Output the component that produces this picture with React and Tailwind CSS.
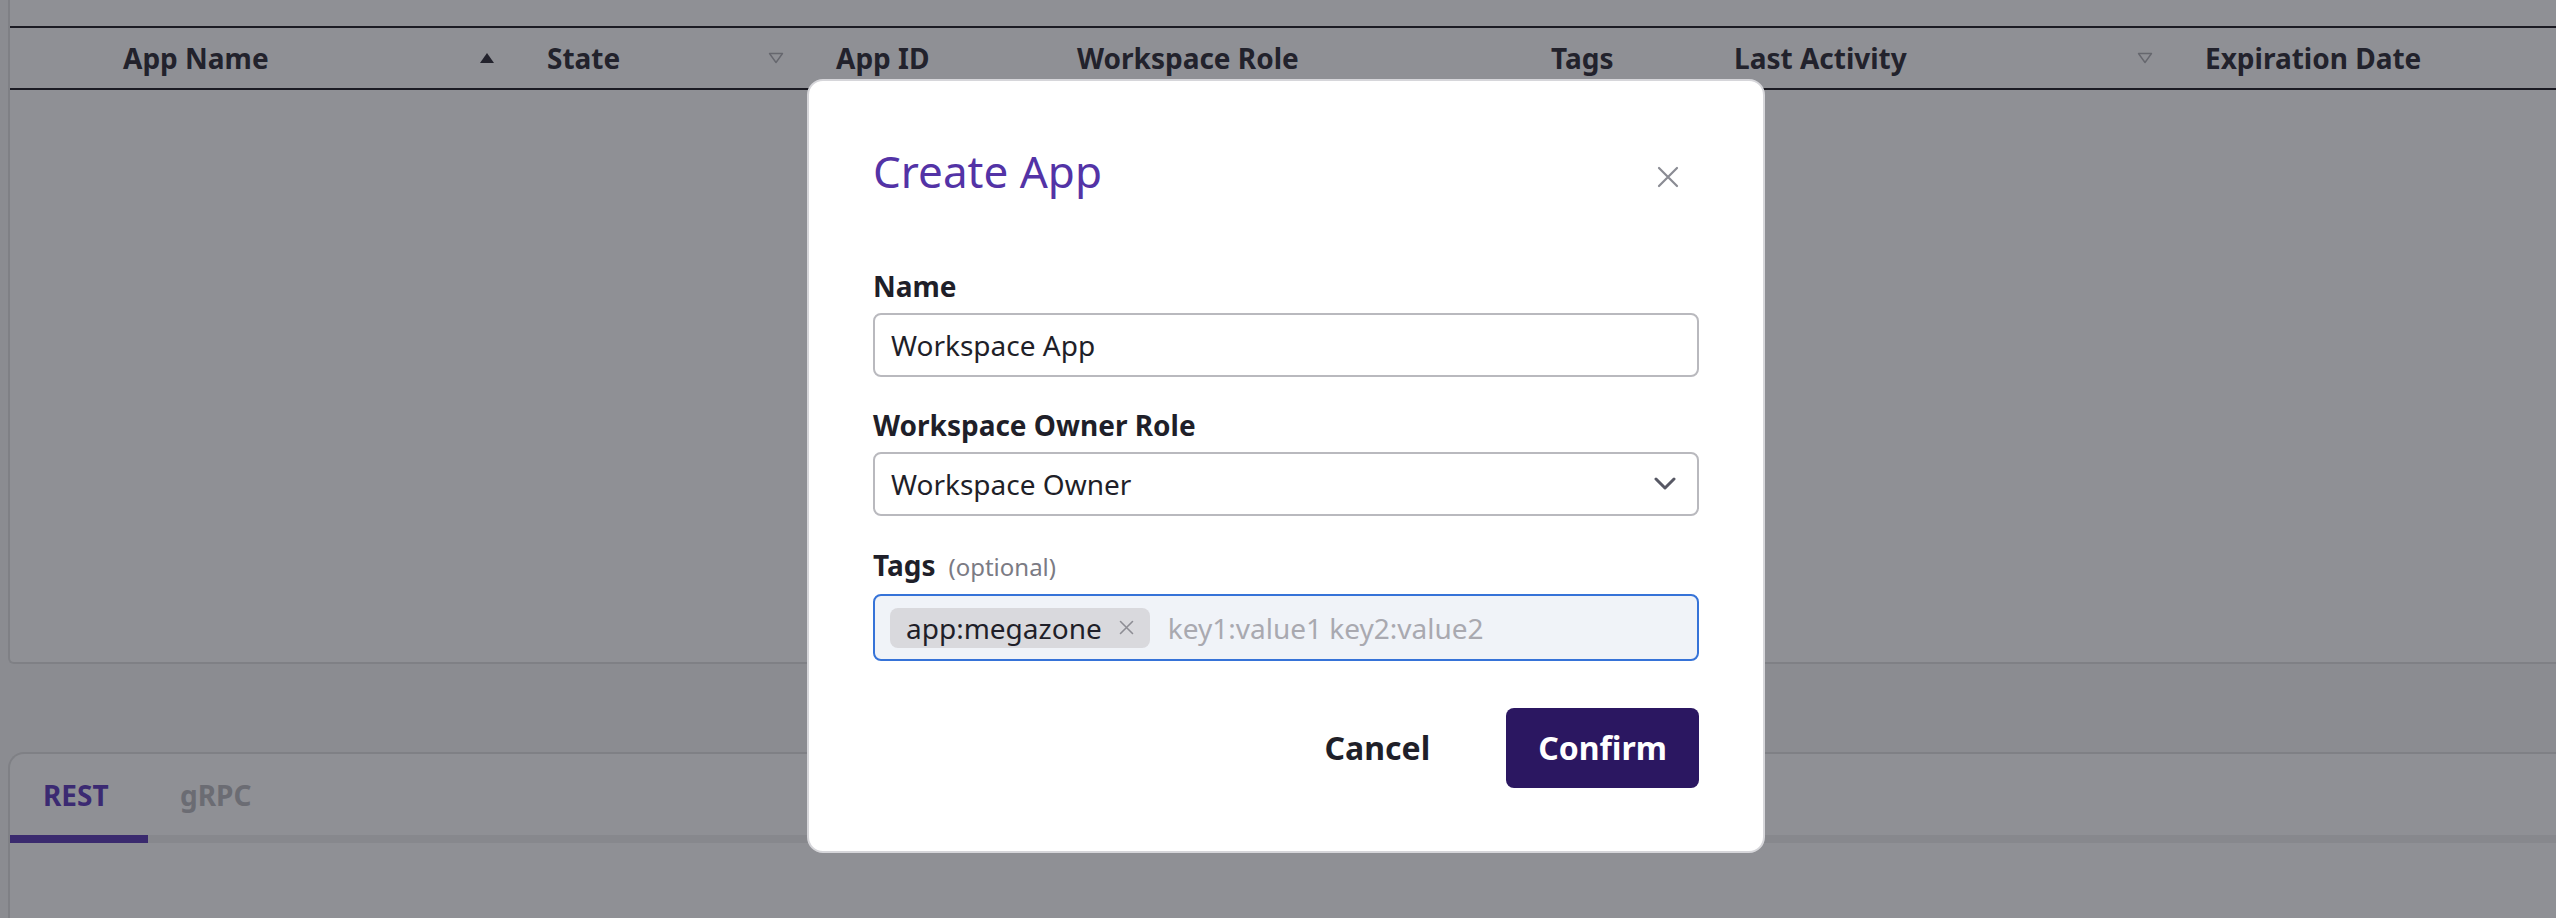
import React from "react";

function SortUp() {
  return (
    <svg width="16" height="12" viewBox="0 0 16 12">
      <path d="M8 1 L15 11 L1 11 Z" fill="#23232d" />
    </svg>
  );
}

function SortDownOutline() {
  return (
    <svg width="16" height="12" viewBox="0 0 16 12">
      <path d="M1.5 1.5 L14.5 1.5 L8 10.5 Z" fill="none" stroke="#66676e" strokeWidth="1.4" strokeLinejoin="round" />
    </svg>
  );
}

function HeaderCell({ w, children, icon }) {
  return (
    <div className={`${w} shrink-0 px-[26px] flex items-center justify-between`}>
      <span className="text-[28px] leading-[40px] font-bold text-[#22222c] whitespace-nowrap">{children}</span>
      {icon}
    </div>
  );
}

export default function App() {
  return (
    <div className="relative w-[2556px] h-[918px] overflow-hidden bg-[#8b8c91] font-['Noto_Sans',sans-serif]">
      <div className="flex flex-col pl-[8px] h-full">
        {/* Top panel */}
        <div className="h-[664px] shrink-0 bg-[#8f9095] border-l-2 border-b-2 border-[#7f8085] rounded-bl-[6px]">
          <div className="h-[26px]" />
          <div className="h-[64px] border-y-2 border-[#1b1b23] flex items-stretch">
            <div className="w-[87px] shrink-0" />
            <HeaderCell w="w-[424px]" icon={<SortUp />}>App Name</HeaderCell>
            <HeaderCell w="w-[289px]" icon={<SortDownOutline />}>State</HeaderCell>
            <HeaderCell w="w-[241px]">App ID</HeaderCell>
            <HeaderCell w="w-[474px]">Workspace Role</HeaderCell>
            <HeaderCell w="w-[183px]">Tags</HeaderCell>
            <HeaderCell w="w-[471px]" icon={<SortDownOutline />}>Last Activity</HeaderCell>
            <HeaderCell w="w-[360px]">Expiration Date</HeaderCell>
          </div>
        </div>

        {/* Bottom panel */}
        <div className="mt-[88px] flex-1 bg-[#8f9095] border-l-2 border-t-2 border-[#7f8085] rounded-tl-[16px]">
          <div className="flex">
            <div className="w-[138px] pl-[33px] pt-[21px] pb-[20px]">
              <span className="text-[28px] leading-[40px] font-bold text-[#3b2a72]">REST</span>
            </div>
            <div className="pl-[32px] pt-[21px] pb-[20px]">
              <span className="text-[28px] leading-[40px] font-bold text-[#6b6c73]">gRPC</span>
            </div>
          </div>
          <div className="h-[8px] bg-[#87888d] flex">
            <div className="w-[138px] h-full bg-[#3a2a6e]" />
          </div>
        </div>
      </div>

      {/* Modal */}
      <div className="absolute left-[807px] top-[79px] w-[958px] h-[774px] bg-white rounded-[16px] border-2 border-[#d6d6da] px-[64px] pt-[64px] flex flex-col">
        <div className="h-[52px] flex items-center justify-between">
          <h2 className="text-[44px] leading-[52px] text-[#5333a6] font-normal">Create App</h2>
          <svg width="22" height="22" viewBox="0 0 22 22" className="mr-[20px] mt-[11px]">
            <path d="M2 2 L20 20 M20 2 L2 20" stroke="#8a8b93" strokeWidth="2.2" strokeLinecap="round" />
          </svg>
        </div>

        <div className="mt-[69px] flex flex-col">
          <label className="text-[28px] leading-[40px] font-bold text-[#1f1f29]">Name</label>
          <div className="mt-[7px] h-[64px] border-2 border-[#b9b9be] rounded-[8px] px-[16px] flex items-center">
            <span className="text-[28px] leading-[40px] text-[#1f1f29]">Workspace App</span>
          </div>
        </div>

        <div className="mt-[28px] flex flex-col">
          <label className="text-[28px] leading-[40px] font-bold text-[#1f1f29]">Workspace Owner Role</label>
          <div className="mt-[7px] h-[64px] border-2 border-[#b9b9be] rounded-[8px] pl-[16px] pr-[21px] flex items-center justify-between">
            <span className="text-[28px] leading-[40px] text-[#1f1f29]">Workspace Owner</span>
            <svg width="22" height="14" viewBox="0 0 22 14">
              <path d="M2 2 L11 11 L20 2" fill="none" stroke="#575864" strokeWidth="3" strokeLinecap="round" strokeLinejoin="round" />
            </svg>
          </div>
        </div>

        <div className="mt-[29px] flex flex-col">
          <div className="flex items-baseline">
            <label className="text-[28px] leading-[40px] font-bold text-[#1f1f29]">Tags</label>
            <span className="ml-[13px] text-[24px] leading-[40px] text-[#7b7b84]">(optional)</span>
          </div>
          <div className="mt-[7px] h-[67px] border-2 border-[#3673d8] bg-[#f0f3f8] rounded-[8px] pl-[15px] flex items-center">
            <div className="h-[40px] bg-[#d9d9dd] rounded-[8px] pl-[16px] pr-[16px] flex items-center">
              <span className="text-[28px] leading-[40px] text-[#1f1f29]">app:megazone</span>
              <svg width="15" height="15" viewBox="0 0 15 15" className="ml-[17px]">
                <path d="M1.5 1.5 L13.5 13.5 M13.5 1.5 L1.5 13.5" stroke="#8d8d94" strokeWidth="1.6" strokeLinecap="round" />
              </svg>
            </div>
            <span className="ml-[18px] text-[28px] leading-[40px] text-[#a9a9b0]">key1:value1 key2:value2</span>
          </div>
        </div>

        <div className="mt-[47px] flex justify-end gap-[44px]">
          <button className="h-[80px] px-[32px] text-[32px] font-bold text-[#1f1f29] bg-transparent">Cancel</button>
          <button className="h-[80px] px-[32px] text-[32px] font-bold text-white bg-[#2b1761] rounded-[8px]">Confirm</button>
        </div>
      </div>
    </div>
  );
}
